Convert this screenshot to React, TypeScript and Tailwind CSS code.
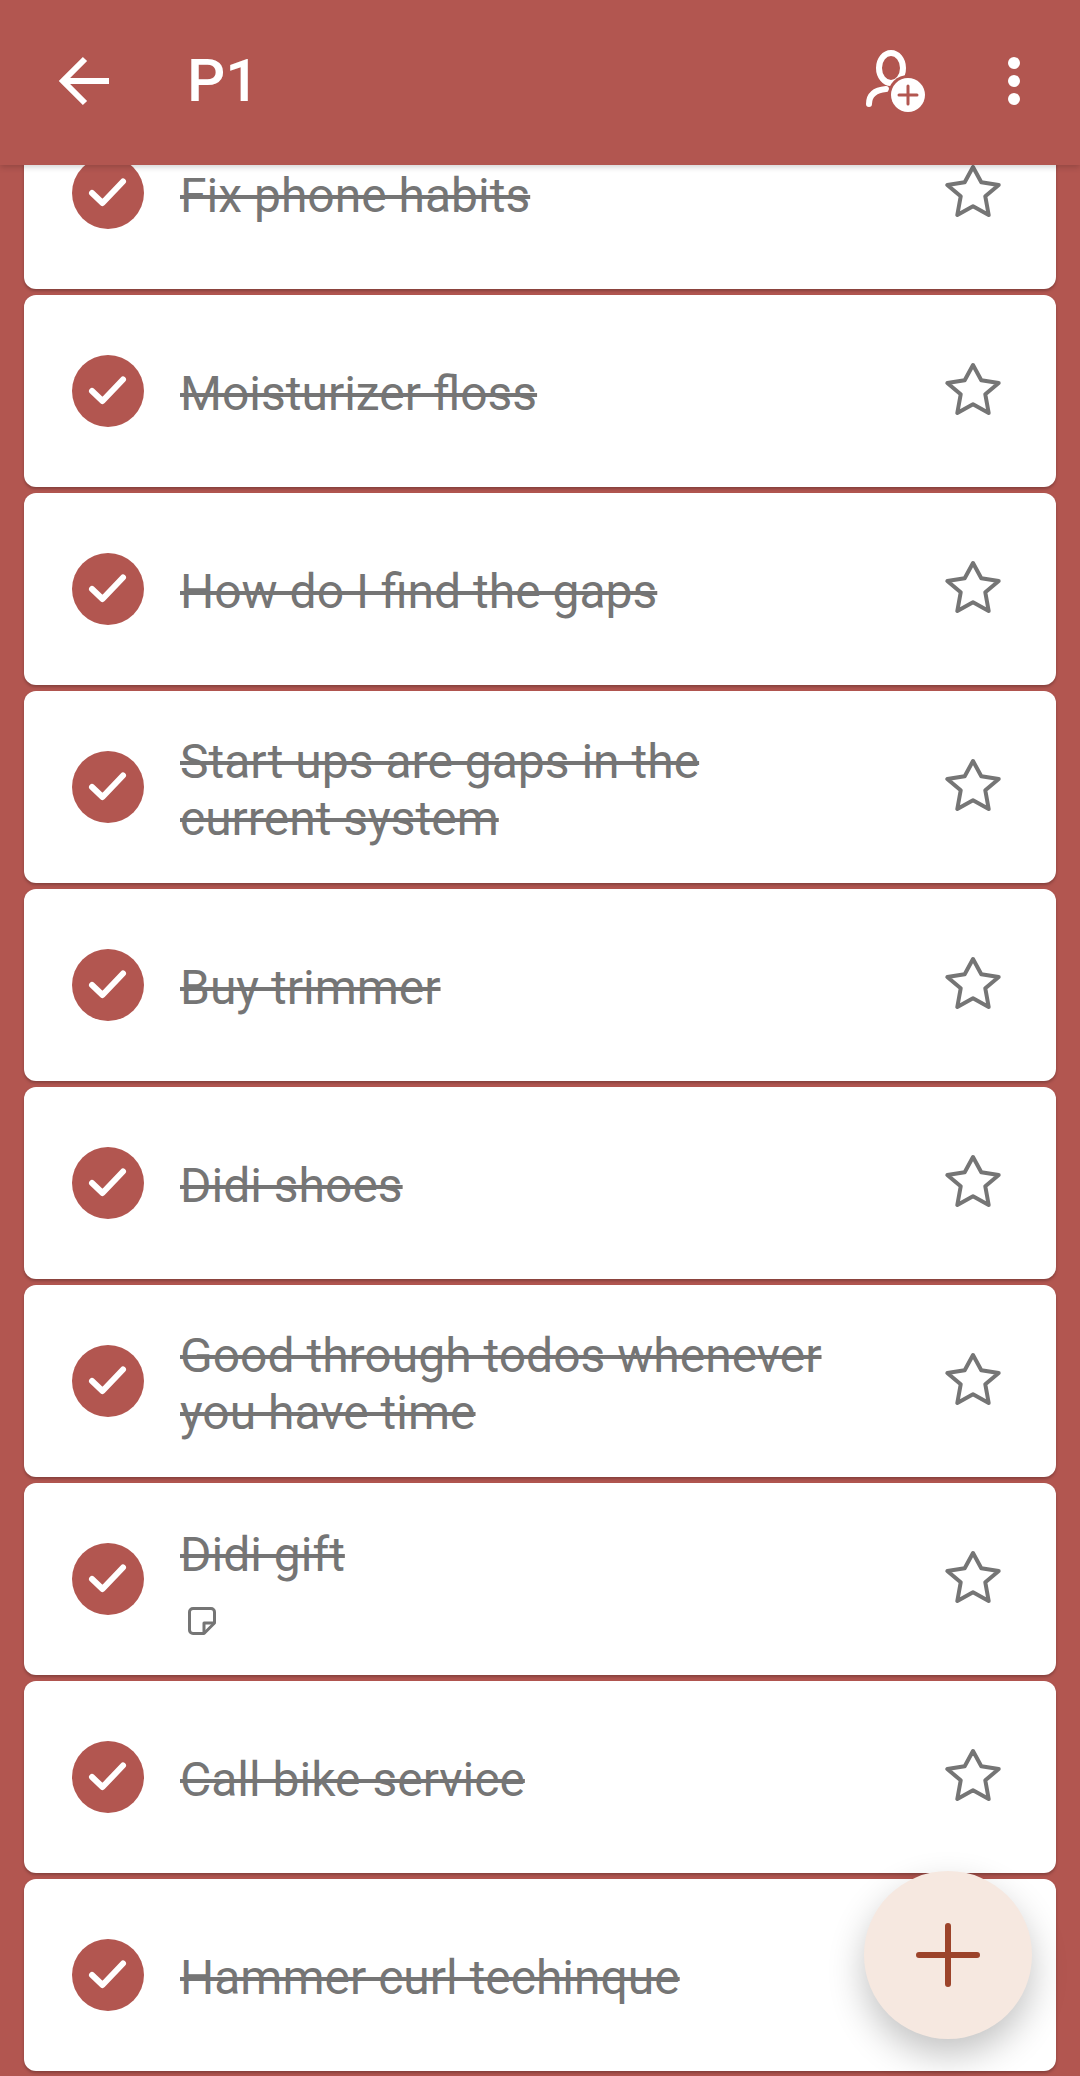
import React from 'react';

const todos = [
    { title: 'Fix phone habits' },
    { title: 'Moisturizer floss' },
    { title: 'How do I find the gaps' },
    { title: 'Start ups are gaps in the current system' },
    { title: 'Buy trimmer' },
    { title: 'Didi shoes' },
    { title: 'Good through todos whenever you have time' },
    { title: 'Didi gift', note: true },
    { title: 'Call bike service' },
    { title: 'Hammer curl techinque' },
];

function BackIcon() {
    return (
        <svg width="56" height="56" viewBox="0 0 56 56" fill="none" stroke="#fff" strokeWidth="6">
            <path d="M51 28H7M27 6L5 28l22 22" />
        </svg>
    );
}

function AddPersonIcon() {
    return (
        <svg width="64" height="72" viewBox="0 0 64 72" fill="none">
            <ellipse cx="27" cy="23" rx="12" ry="15" stroke="#fff" strokeWidth="6" />
            <path d="M5 59c0-9 6-14 17-15" stroke="#fff" strokeWidth="6" strokeLinecap="round" />
            <circle cx="44" cy="50" r="20" fill="#b25650" />
            <circle cx="44" cy="50" r="17" fill="#fff" />
            <path d="M35 50h18M44 41v18" stroke="#b25650" strokeWidth="3" strokeLinecap="round" />
        </svg>
    );
}

function MoreIcon() {
    return (
        <svg width="12" height="48" viewBox="0 0 12 48" fill="#fff">
            <circle cx="6" cy="6" r="6" />
            <circle cx="6" cy="24" r="6" />
            <circle cx="6" cy="42" r="6" />
        </svg>
    );
}

function CheckCircle() {
    return (
        <svg width="72" height="72" viewBox="0 0 72 72" className="shrink-0">
            <circle cx="36" cy="36" r="36" fill="#b25650" />
            <path d="M20 36l10.500 10L51 24.500" fill="none" stroke="#fff" strokeWidth="6" strokeLinecap="round" strokeLinejoin="round" />
        </svg>
    );
}

function StarIcon() {
    return (
        <svg width="64" height="64" viewBox="0 0 64 64" fill="none" className="shrink-0">
            <path
                d="M32 6L40.300 21.300 57.700 24 44.300 35.300 47.700 54 32 45.300 16.300 54 19.700 35.300 6.300 24 23.700 21.300Z"
                stroke="#757575"
                strokeWidth="4"
                strokeLinejoin="round"
            />
        </svg>
    );
}

function NoteIcon() {
    return (
        <svg width="28" height="28" viewBox="0 0 28 28" fill="none" stroke="#757575" strokeWidth="3" strokeLinejoin="round">
            <path d="M5 1.500h18a3.500 3.500 0 0 1 3.500 3.500v11L16 26.500H5A3.500 3.500 0 0 1 1.500 23V5A3.500 3.500 0 0 1 5 1.500z" />
            <path d="M16 26.500V16h10.500" />
        </svg>
    );
}

function TodoCard({ title, note }: { title: string; note?: boolean }) {
    return (
        <div className="flex h-[192px] shrink-0 items-center rounded-[12px] bg-white pl-[48px] pr-[51px] shadow-[0_2px_3px_rgba(0,0,0,0.25)]">
            <CheckCircle />
            <div className={note ? 'ml-[36px] mr-[101px] flex-1 pt-[2px]' : 'ml-[36px] mr-[101px] flex-1 pt-[5px]'}>
                <p className="text-[48px] leading-[57px] text-[#757575] line-through">{title}</p>
                {note && (
                    <div className="mt-[24px] ml-[8px]">
                        <NoteIcon />
                    </div>
                )}
            </div>
            <StarIcon />
        </div>
    );
}

export default function App() {
    return (
        <div className="relative flex h-[2076px] w-[1080px] flex-col overflow-hidden bg-[#b25650] font-['Roboto',sans-serif]">
            {/* Top bar */}
            <header className="relative z-10 flex h-[165px] shrink-0 items-center bg-[#b25650] pb-[3px] pl-[58px] pr-[60px] shadow-[0_2px_6px_rgba(0,0,0,0.18)]">
                <BackIcon />
                <h1 className="ml-[73px] flex-1 text-[60px] font-medium text-white">P1</h1>
                <AddPersonIcon />
                <div className="ml-[80px]">
                    <MoreIcon />
                </div>
            </header>

            {/* List, scrolled so the first card sits under the bar */}
            <div className="flex-1 overflow-hidden">
                <div className="mt-[-68px] flex flex-col gap-[6px] px-[24px]">
                    {todos.map((t) => (
                        <TodoCard key={t.title} title={t.title} note={t.note} />
                    ))}
                </div>
            </div>

            <button className="absolute bottom-[37px] right-[48px] z-20 flex h-[168px] w-[168px] items-center justify-center rounded-full bg-[#f6e8e0] shadow-[0_16px_36px_rgba(0,0,0,0.24)]">
                <svg width="64" height="64" viewBox="0 0 64 64" stroke="#9c432a" strokeWidth="6" strokeLinecap="round">
                    <path d="M3 32h58M32 3v58" />
                </svg>
            </button>
        </div>
    );
}
